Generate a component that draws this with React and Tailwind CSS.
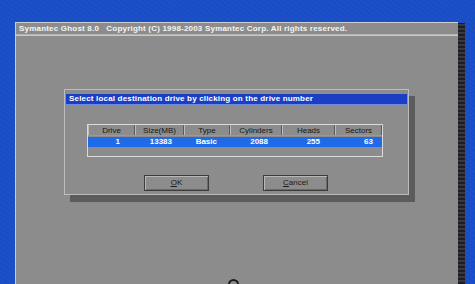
import React from "react";

const cols = [
  { h: "Drive", v: "1", w: "w-[47px]", pr: "pr-[15px]" },
  { h: "Size(MB)", v: "13383", w: "w-[49px]", pr: "pr-[12px]" },
  { h: "Type", v: "Basic", w: "w-[46px]", pr: "pr-[13px]" },
  { h: "Cylinders", v: "2088", w: "w-[52px]", pr: "pr-[14px]" },
  { h: "Heads", v: "255", w: "w-[53px]", pr: "pr-[15px]" },
  { h: "Sectors", v: "63", w: "w-[47px]", pr: "pr-[9px]" },
];

export default function App() {
  return (
    <div
      className="relative w-[475px] h-[284px] overflow-hidden bg-[#1b4fc6] bg-[repeating-linear-gradient(35deg,#1b4fc6_0px,#1a4cc3_2px,#1d53cc_4px)] pt-[22px] pl-[15px] flex"
      style={{ fontFamily: '"Liberation Sans", Arial, sans-serif' }}
    >
      <div className="flex">
        <div className="w-[443px] h-[262px] bg-[#8c8c8c] border-t border-l border-[#cfcfcf] flex flex-col">
          <div className="h-[11px] pl-[3px] text-[#f4f4f4] text-[8px] font-bold leading-[11px] whitespace-pre tracking-[0.2px]">
            {"Symantec Ghost 8.0   Copyright (C) 1998-2003 Symantec Corp. All rights reserved."}
          </div>
          <div className="h-[2px] bg-[#b4b4b4] border-b border-[#c8c8c8]" />
          <div className="flex-1 pl-[48px] pt-[53px]">
            <div className="w-[345px] h-[106px] border border-[#bdbdbd] p-[1px] bg-[#8c8c8c] shadow-[6px_7px_0_#5c5c5c] flex flex-col">
              <div className="mt-[2px] h-[12px] bg-[#1a3fc4] border-t border-b border-[#6f8ae0] pl-[3px] text-white text-[8px] font-bold leading-[10px] whitespace-pre tracking-[0.18px]">
                Select local destination drive by clicking on the drive number
              </div>
              <div className="mt-[19px] ml-[21px] w-[296px] h-[33px] border border-[#dadada] flex flex-col text-[8px] leading-[10px]">
                <div className="h-[11px] flex border-b border-[#9a9a9a]">
                  {cols.map((c) => (
                    <div
                      key={c.h}
                      className={`${c.w} h-full border-l border-[#bcbcbc] border-r border-r-[#5a5a5a] text-[#161616] text-center leading-[11px]`}
                    >
                      {c.h}
                    </div>
                  ))}
                </div>
                <div className="mt-[1px] h-[10px] flex bg-[#1f6ae8] text-white font-bold">
                  {cols.map((c) => (
                    <div key={c.h} className={`${c.w} text-right ${c.pr}`}>
                      {c.v}
                    </div>
                  ))}
                </div>
              </div>
              <div className="mt-[18px] ml-[78px] flex gap-[54px] text-[8px] text-[#1a1a1a]">
                <div className="w-[65px] h-[16px] border border-[#3c3c3c] shadow-[inset_1px_1px_0_#b8b8b8,inset_-1px_-1px_0_#6a6a6a] flex items-center justify-center">
                  <span><span className="underline">O</span>K</span>
                </div>
                <div className="w-[65px] h-[16px] border border-[#3c3c3c] shadow-[inset_1px_1px_0_#b8b8b8,inset_-1px_-1px_0_#6a6a6a] flex items-center justify-center">
                  <span><span className="underline">C</span>ancel</span>
                </div>
              </div>
            </div>
          </div>
        </div>
        <div className="w-[7px] mt-[1px] bg-[#2e2e34] bg-[repeating-linear-gradient(0deg,#1e1e22_0px,#1e1e22_2px,#4a4a55_3px,#2a2a30_4px)]" />
      </div>
      <div className="absolute left-[228px] top-[279px] w-[11px] h-[11px] rounded-full border-2 border-[#1a1a1a]" />
    </div>
  );
}
